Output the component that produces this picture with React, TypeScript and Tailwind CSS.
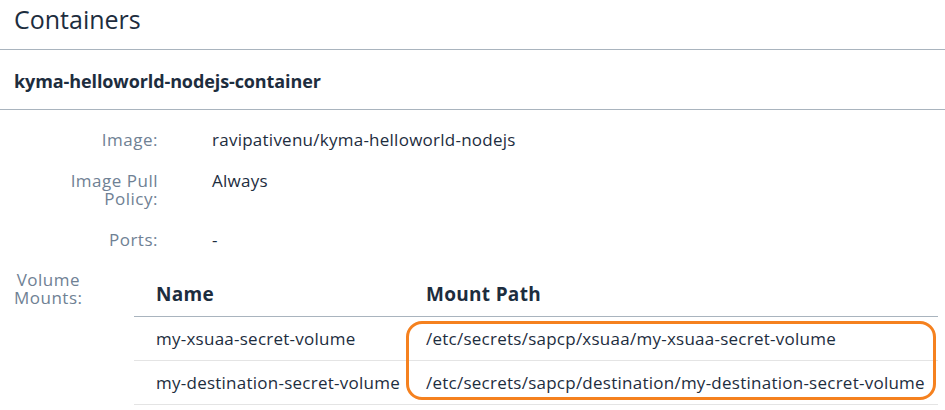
import React from "react";

const mounts = [
  { name: "my-xsuaa-secret-volume", path: "/etc/secrets/sapcp/xsuaa/my-xsuaa-secret-volume" },
  { name: "my-destination-secret-volume", path: "/etc/secrets/sapcp/destination/my-destination-secret-volume" },
];

const Label = ({ children, className = "" }: { children: React.ReactNode; className?: string }) => (
  <div className={`text-right text-[#6f8194] text-[17px] tracking-[0.5px] ${className}`}>{children}</div>
);

export default function App() {
  return (
    <div
      className="w-[945px] h-[410px] overflow-hidden bg-white text-[#1d2d3e] text-[17px] leading-[18px] tracking-[0.25px]"
      style={{ fontFamily: '"Open Sans", "Noto Sans", sans-serif' }}
    >
      <div className="h-[50px] border-b border-[#a9b4be] pl-[14px] pt-[2px]">
        <h2 className="text-[25px] leading-[34px] font-normal tracking-normal">Containers</h2>
      </div>

      <div className="h-[60px] border-b border-[#a9b4be] pl-[14px] flex items-center">
        <h3 className="text-[18px] font-bold tracking-[-0.1px] pt-[2px]">kyma-helloworld-nodejs-container</h3>
      </div>

      <div className="flex flex-col gap-[23px] pt-[21px] pl-[14px]">
        <div className="flex">
          <Label className="w-[144px]">Image:</Label>
          <div className="ml-[54px]">ravipativenu/kyma-helloworld-nodejs</div>
        </div>
        <div className="flex">
          <Label className="w-[144px]">
            Image Pull
            <br />
            Policy:
          </Label>
          <div className="ml-[54px]">Always</div>
        </div>
        <div className="flex">
          <Label className="w-[144px]">Ports:</Label>
          <div className="ml-[54px]">-</div>
        </div>
        <div className="flex -mt-[1px]">
          <Label className="w-[66px]">
            Volume
            <br />
            Mounts:
          </Label>
          <div className="ml-[54px] w-[804px] relative">
            <div className="flex h-[46px] items-center border-b border-[#a9b4be] font-bold text-[19px] tracking-[0.3px]">
              <div className="w-[272px] pl-[22px]">Name</div>
              <div className="pl-[20px]">Mount Path</div>
            </div>
            {mounts.map((m) => (
              <div key={m.name} className="flex h-[44px] items-center border-b border-[#e4e4e4]">
                <div className="w-[272px] pl-[22px]">{m.name}</div>
                <div className="pl-[20px]">{m.path}</div>
              </div>
            ))}
            <div className="absolute left-[272px] top-[50px] w-[530px] h-[79px] border-[3px] border-[#f5811f] rounded-[16px]" />
          </div>
        </div>
      </div>
    </div>
  );
}
